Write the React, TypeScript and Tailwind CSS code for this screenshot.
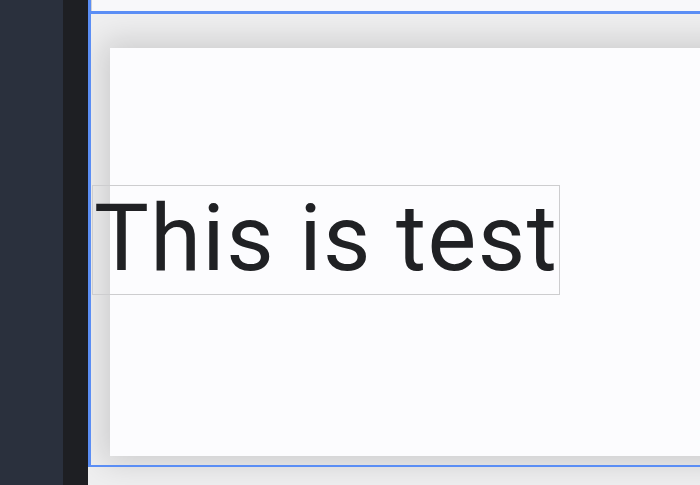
export default function App() {
  return (
    <div className="flex h-[485px] w-[700px] overflow-hidden font-['Roboto',sans-serif]">
      {/* side bars */}
      <aside className="w-[63px] shrink-0 bg-[#2a303d]" />
      <div className="w-[25px] shrink-0 bg-[#1e1f23]" />

      {/* canvas */}
      <main className="relative flex-1 overflow-hidden bg-[#efeff0]">
        <div className="ml-[3px] h-[11px] border-l border-[#d2d2d4] bg-[#f8f8fa]" />

        <div className="ml-[22px] mt-[37px] h-[408px] w-[640px] bg-[#fcfcfe] shadow-[0_0_30px_7px_rgba(0,0,0,0.15)]" />

        {/* text element */}
        <div className="absolute left-[4px] top-[185px] flex h-[110px] w-[468px] items-center border border-[#cdcdcf] pb-[3px] pl-[1px]">
          <span className="whitespace-nowrap text-[92px] leading-none tracking-[1.4px] text-[#202124]">This is test</span>
        </div>

        {/* selection outline */}
        <div className="pointer-events-none absolute left-0 top-0 h-[467px] w-[3px] bg-[#5b8ef5]" />
        <div className="pointer-events-none absolute left-0 right-0 top-[11px] h-[3px] bg-[#5b8ef5]" />
        <div className="pointer-events-none absolute left-0 right-0 top-[465px] h-[2px] bg-[#5b8ef5]" />
      </main>
    </div>
  );
}
